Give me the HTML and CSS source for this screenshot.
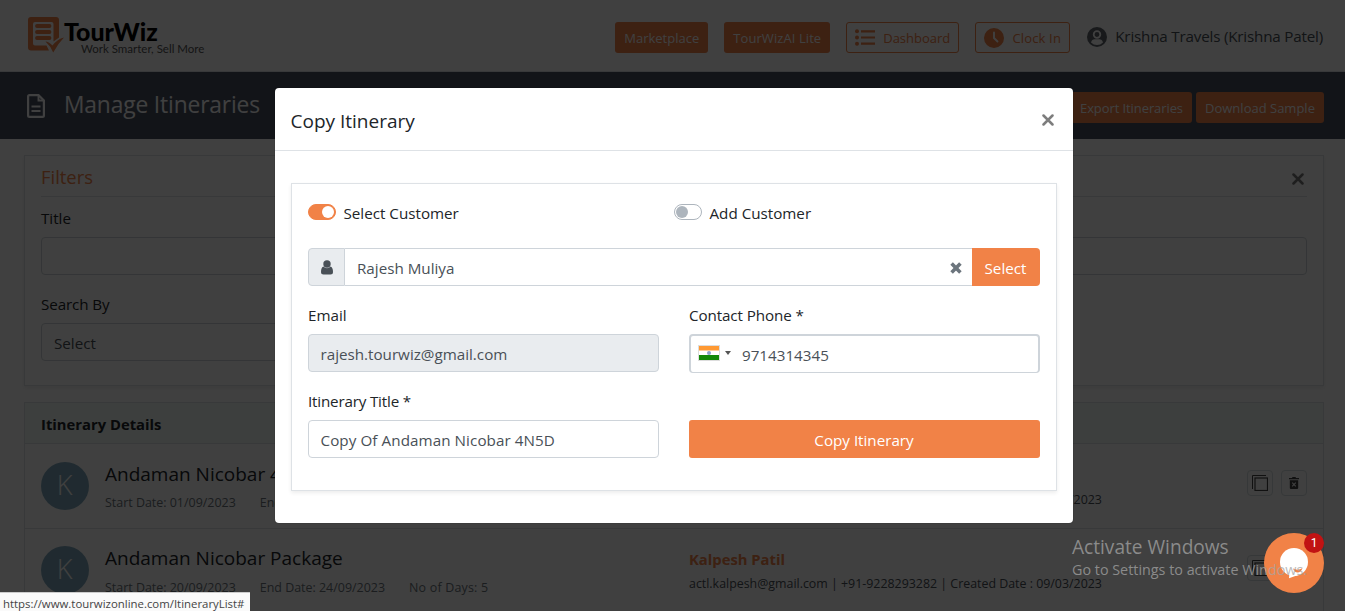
FILE: index.html
```html
<!DOCTYPE html>
<html lang="en">
<head>
<meta charset="utf-8">
<title>Manage Itineraries</title>
<link rel="stylesheet" href="styles.css">
</head>
<body>
<div class="page">
  <header class="topbar">
    <div class="brand">
      <svg class="brand-mark" width="37" height="38" viewBox="0 0 37 38">
        <path fill="#f18247" fill-rule="evenodd" d="M3 0H28Q31 0 31 3V20.500L25.500 24.500V7Q25.500 5 23.500 5H7Q5 5 5 7V26.500Q5 28.500 7 28.500H18.500L21 33.500H3Q0 33.500 0 30.500V3Q0 0 3 0Z"/>
        <path d="M9 9H21.500M9 15H21.500M9 21H21.500" stroke="#f18247" stroke-width="3.800" stroke-linecap="round"/>
        <path fill="#f18247" d="M17.500 24.500Q20.500 24.500 24.500 28.500Q29.500 22 36 20.500Q30 26.500 25.200 35.500Q22.500 29 17.500 24.500Z"/>
      </svg>
      <div class="brand-text">
        <div class="brand-name">TourWiz</div>
        <div class="brand-tag">Work Smarter, Sell More</div>
      </div>
    </div>
    <nav class="actions">
      <a class="btn-sm solid w-market">Marketplace</a>
      <a class="btn-sm solid w-ai">TourWizAI Lite</a>
      <a class="btn-sm outline w-dash">
        <svg width="20" height="17" viewBox="0 0 20 17" fill="#f18247"><circle cx="2" cy="2.300" r="2"/><circle cx="2" cy="8.500" r="2"/><circle cx="2" cy="14.700" r="2"/><path d="M6 1.200h14v2.200H6zM6 7.400h14v2.200H6zM6 13.600h14v2.200H6z"/></svg>
        <span>Dashboard</span></a>
      <a class="btn-sm outline w-clock">
        <svg width="20" height="20" viewBox="0 0 20 20"><circle cx="10" cy="10" r="10" fill="#f18247"/><path d="M10 4.500V10L13.500 13.500" fill="none" stroke="#fff" stroke-width="1.900" stroke-linecap="round"/></svg>
        <span>Clock In</span></a>
      <a class="user">
        <svg width="20" height="20" viewBox="0 0 20 20"><circle cx="10" cy="10" r="10" fill="#5f666d"/><circle cx="10" cy="7.500" r="3.300" fill="#5f666d" stroke="#fff" stroke-width="1.800"/><path d="M4 15.500Q5 12.300 7.600 12.300H12.400Q15 12.300 16 15.500Q13.500 18 10 18Q6.500 18 4 15.500Z" fill="#fff"/></svg>
        <span>Krishna Travels (Krishna Patel)</span></a>
    </nav>
  </header>

  <section class="titlebar">
    <svg width="18" height="24" viewBox="0 0 18 24" fill="none" stroke="#fff" stroke-width="2.200"><path d="M1.100 2.500Q1.100 1.100 2.500 1.100H11.500L16.900 6.500V21.500Q16.900 22.900 15.500 22.900H2.500Q1.100 22.900 1.100 21.500Z"/><path d="M11.500 1V6.500H17M4.500 12.500h9M4.500 17h9" stroke-width="1.900"/></svg>
    <h1>Manage Itineraries</h1>
    <div class="title-actions"><a class="btn-sm solid w-export">Export Itineraries</a><a class="btn-sm solid w-sample">Download Sample</a></div>
  </section>

  <main>
    <section class="card filters">
      <div class="filters-head"><h2>Filters</h2>
        <svg width="12" height="12" viewBox="0 0 12 12" stroke="#777" stroke-width="2.500" stroke-linecap="round"><path d="M1.500 1.500l9 9M10.500 1.500l-9 9"/></svg></div>
      <label>Title</label>
      <div class="field"></div>
      <label class="second">Search By</label>
      <div class="field short">Select</div>
    </section>

    <section class="card list">
      <div class="list-head">Itinerary Details</div>
      <div class="row">
        <div class="avatar">K</div>
        <div class="trip"><h3>Andaman Nicobar 4N5D</h3><p><span>Start Date: 01/09/2023</span><span>End Date: 05/09/2023</span></p></div>
        <div class="contact"><h4>Kalpesh Patil</h4><p>actl.kalpesh@gmail.com | +91-9228293282 | Created Date : 09/03/2023</p></div>
        <div class="tools">
          <span class="tool"><svg width="16" height="16" viewBox="0 0 16 16" fill="none" stroke="#444"><path d="M.500 14V.500H14" /><rect x="3" y="3" width="12.500" height="12.500" stroke-width="1.200"/></svg></span>
          <span class="tool"><svg width="10" height="12" viewBox="0 0 10 12"><path fill="#444" d="M0 1H3L3.500 0H6.500L7 1H10V2.200H0ZM.800 3.200H9.200V11Q9.200 12 8 12H2Q.800 12 .800 11Z"/><path d="M3.200 5.600l3.600 3.800M6.800 5.600L3.200 9.400" stroke="#fff" stroke-width="1.100"/></svg></span>
        </div>
      </div>
      <div class="row">
        <div class="avatar">K</div>
        <div class="trip"><h3>Andaman Nicobar Package</h3><p><span>Start Date: 20/09/2023</span><span>End Date: 24/09/2023</span><span class="days">No of Days: 5</span></p></div>
        <div class="contact"><h4>Kalpesh Patil</h4><p>actl.kalpesh@gmail.com | +91-9228293282 | Created Date : 09/03/2023</p></div>
        <div class="tools">
          <span class="tool"><svg width="16" height="16" viewBox="0 0 16 16" fill="none" stroke="#444"><path d="M.500 14V.500H14" /><rect x="3" y="3" width="12.500" height="12.500" stroke-width="1.200"/></svg></span>
          <span class="tool"></span>
        </div>
      </div>
    </section>
  </main>
</div>

<div class="backdrop"></div>

<div class="modal">
  <div class="modal-head"><h2>Copy Itinerary</h2>
    <svg width="12" height="12" viewBox="0 0 12 12" stroke="#7d7d7d" stroke-width="2.500" stroke-linecap="round"><path d="M1.500 1.500l9 9M10.500 1.500l-9 9"/></svg></div>
  <div class="modal-body">
    <div class="form">
      <div class="switches">
        <div class="switch-item"><i class="switch on"></i>Select Customer</div>
        <div class="switch-item"><i class="switch"></i>Add Customer</div>
      </div>
      <div class="group">
        <div class="addon"><svg width="12" height="15" viewBox="0 0 12 15" fill="#495057"><circle cx="6" cy="4" r="3.700"/><path d="M2.300 6.500Q6 10 9.700 6.500Q12 7.500 12 12Q12 14.500 9.500 14.500H2.500Q0 14.500 0 12Q0 7.500 2.300 6.500Z"/></svg></div>
        <div class="group-input"><span>Rajesh Muliya</span>
          <svg width="12" height="12" viewBox="0 0 12 12" stroke="#6c757d" stroke-width="3.600"><path d="M1.600 1.600l8.800 8.800M10.400 1.600l-8.800 8.800"/></svg></div>
        <div class="group-btn">Select</div>
      </div>
      <div class="grid">
        <div class="cell"><label>Email</label><div class="input disabled">rajesh.tourwiz@gmail.com</div></div>
        <div class="cell"><label class="phone-label">Contact Phone *</label>
          <div class="input phone">
            <svg width="22" height="16" viewBox="0 0 22 16"><rect x=".500" y=".500" width="21" height="15" fill="#fff" stroke="#ddd"/><rect x="1" y="1" width="20" height="4.500" fill="#ff9933"/><rect x="1" y="10" width="20" height="5" fill="#138808"/><circle cx="11" cy="8" r="2" fill="#8a9fca"/></svg>
            <i class="caret"></i><span>9714314345</span></div></div>
        <div class="cell"><label class="tight">Itinerary Title *</label><div class="input loose">Copy Of Andaman Nicobar 4N5D</div></div>
        <div class="cell end"><div class="submit">Copy Itinerary</div></div>
      </div>
    </div>
  </div>
</div>

<div class="chat">
  <svg width="60" height="60" viewBox="0 0 60 60"><circle cx="30" cy="30" r="30" fill="#f18247"/><circle cx="30" cy="29" r="14" fill="#fff"/><path fill="#fff" d="M25.500 40L25 45.300L37 41L36 38Z"/><path fill="#f18247" d="M29 35.500Q34 38 38.500 35Q37 39.500 33.500 39.500Q30.500 39.500 29 35.500Z"/></svg>
  <span class="badge">1</span>
</div>
<div class="activation"><div class="activation-title">Activate Windows</div><div class="activation-text">Go to Settings to activate Windows.</div></div>
<div class="status">https://www.tourwizonline.com/ItineraryList#</div>
</body>
</html>
```
FILE: styles.css
```css
*{box-sizing:border-box}
body{margin:0;width:1345px;height:611px;overflow:hidden;position:relative;font-family:"Open Sans","Noto Sans",sans-serif;font-size:15.2px;line-height:24px;color:#212529;background:#fff}
h1,h2,h3,h4,p{margin:0;font-weight:400}
svg{display:block;flex:none}
label{display:block}
.page{height:611px;overflow:hidden;white-space:nowrap}

.topbar{height:72px;padding:0 22px 0 28px;display:flex;justify-content:space-between;border-bottom:1px solid #dee2e6}
.brand{display:flex;padding-top:17px;font-family:Lato,sans-serif}
.brand-name{font-size:24.9px;font-weight:900;line-height:22px;color:#000;margin-top:3px}
.brand-tag{font-size:11.5px;line-height:12px;color:#555;margin:1px 0 0 17px}
.brand-text{margin-left:-1px}
.actions{display:flex;gap:16px;padding-top:22px}
.btn-sm{height:31px;border-radius:3px;font-size:13px;display:flex;align-items:center;justify-content:center;padding-top:1px;white-space:nowrap}
.solid{background:#f18247;color:#fff}
.outline{border:1px solid #f18247;color:#f18247;gap:8px;padding-top:0}
.outline span{padding-top:1px}
.w-market{width:93px}
.w-ai{width:106px;letter-spacing:.08px}
.w-dash{width:113px}
.w-clock{width:95px;letter-spacing:.15px}
.w-export{width:121px;letter-spacing:-.09px}
.w-sample{width:128px}
.user{display:flex;gap:8px;height:30px;align-items:center;margin-left:1px;color:#495057;letter-spacing:-.19px}
.user span{padding-bottom:2px}

.titlebar{height:67px;background:#495162;color:#fff;display:flex;align-items:center;padding:0 21px 0 27px}
.titlebar h1{font-size:22.8px;line-height:34px;letter-spacing:-.15px;margin-left:19px;padding-bottom:2px}
.title-actions{margin-left:auto;display:flex;gap:4px;padding-top:4px}

main{padding:16px 21px 0 24px}
.card{border:1px solid #dee2e6}
.filters{height:231px;padding:0 16px;box-shadow:0 2px 4px rgba(0,0,0,.075)}
.filters-head{height:41px;border-bottom:1px solid #dee2e6;display:flex;justify-content:space-between;align-items:center;padding:5px 3px 0 0;margin-bottom:9px}
.filters-head h2{font-size:18.4px;color:#f18247;padding-bottom:3px}
.field{height:38px;border:1px solid #ced4da;border-radius:4px;margin-top:7px;padding:7px 12px;color:#495057}
.short{width:500px}
.second{margin-top:17px;letter-spacing:-.1px}

.list{margin-top:16px}
.list-head{height:41px;background:#f1fbf8;border-bottom:1px solid #dee2e6;padding:9px 16px;font-weight:700;font-size:14.8px}
.row{height:85px;border-bottom:1px solid #dee2e6;display:flex;padding:0 16px}
.avatar{width:48px;height:48px;border-radius:50%;background:#81a9be;color:#fff;font-size:27px;line-height:46px;font-weight:300;text-align:center;margin-top:18px;flex:none;padding-right:1px}
.trip{width:600px;padding:17px 0 0 16px}
.trip h3{font-size:19px;line-height:26px}
.trip p{display:flex;gap:24px;font-size:12.45px;line-height:20px;margin-top:6px;color:#6c757d}
.days{letter-spacing:.2px}
.contact{width:558px;padding-top:19px}
.contact h4{font-size:14.8px;font-weight:700;color:#f18247}
.contact p{font-size:12.4px;line-height:20px;color:#495057;margin-top:3px}
.row + .row .avatar{margin-top:17px}
.row + .row .trip{padding-top:16px}
.row + .row .trip p{margin-top:7px}
.row + .row .contact{padding-top:18px}
.tools{display:flex;gap:8px;padding-top:26px}
.tool{width:26px;height:26px;border:1px solid #d5dfe2;border-radius:4px;display:flex;align-items:center;justify-content:center;flex:none}

.backdrop{position:absolute;inset:0;background:rgba(0,0,0,.75)}

.modal{position:absolute;left:275px;top:88px;width:798px;height:435px;background:#fff;border-radius:4px;box-shadow:0 0 1px rgba(0,0,0,.6)}
.modal-head{height:63px;border-bottom:1px solid #dee2e6;display:flex;justify-content:space-between;align-items:center;padding:1px 19px 0 15.500px}
.modal-head h2{font-size:19px;line-height:26px;padding-top:3px}
.modal-body{padding:32px 16px}
.form{height:308px;border:1px solid #dee2e6;padding:20px 16px;box-shadow:0 2px 4px rgba(0,0,0,.075)}
.switches{display:flex}
.switch-item{width:366px;height:20px;line-height:18px;display:flex;gap:7.500px}
.switch{width:28px;height:16px;border-radius:8px;border:1px solid #adb5bd;padding:1px;display:block}
.switch::before{content:"";display:block;width:12px;height:12px;border-radius:50%;background:#adb5bd}
.switch.on{background:#f18247;border-color:#f18247}
.switch.on::before{background:#fff;margin-left:12px}
.group{display:flex;height:38px;margin-top:24px}
.addon{width:37px;background:#e9ecef;border:1px solid #ced4da;border-radius:4px 0 0 4px;display:flex;align-items:center;justify-content:center}
.group-input{flex:1;border:1px solid #ced4da;border-width:1px 0;display:flex;align-items:center;justify-content:space-between;padding:2px 10px 0 12px;color:#495057}
.group-btn{width:68px;background:#f18247;color:#fff;border-radius:0 4px 4px 0;text-align:center;line-height:40px;padding-right:1px}
.grid{display:grid;grid-template-columns:1fr 1fr;column-gap:30px}
.cell{height:86px;padding-top:17px}
.cell .input,.cell .submit{margin-top:7px}
.cell.end{padding-top:41px}
.input{height:38px;border:1px solid #ced4da;border-radius:4px;padding:0 11.500px;line-height:38px;color:#495057}
.disabled{background:#e9ecef}
.phone{height:39px;border-width:2px 2px 1px 2px;display:flex;padding:0 7px}
.phone svg{margin-top:9px}
.caret{width:6px;height:4px;margin:15px 11px 0 5px;background:#555;clip-path:polygon(0 0,100% 0,50% 100%)}
.phone-label{letter-spacing:-.1px}
.tight{letter-spacing:-.18px}
.loose{letter-spacing:.08px}
.submit{height:38px;border-radius:3px;background:#f18247;color:#fff;text-align:center;line-height:40px;padding-right:1px}

.chat{position:absolute;left:1264px;top:533px;width:60px;height:60px}
.badge{position:absolute;left:40px;top:0;width:20px;height:20px;border-radius:50%;background:#c11313;color:#fff;font:12px/20px Roboto,sans-serif;text-align:center}
.activation{position:absolute;left:1072px;top:534px;color:rgba(165,165,165,.75);white-space:nowrap}
.activation-title{font-size:19.1px;line-height:26px}
.activation-text{font-size:14.35px;line-height:20px}
.status{position:absolute;left:0;top:592px;width:250px;height:19px;background:#fafafa;border-top:1px solid #ccc;color:#444;font-size:11.4px;line-height:21px;padding-left:3px;white-space:nowrap}
```
